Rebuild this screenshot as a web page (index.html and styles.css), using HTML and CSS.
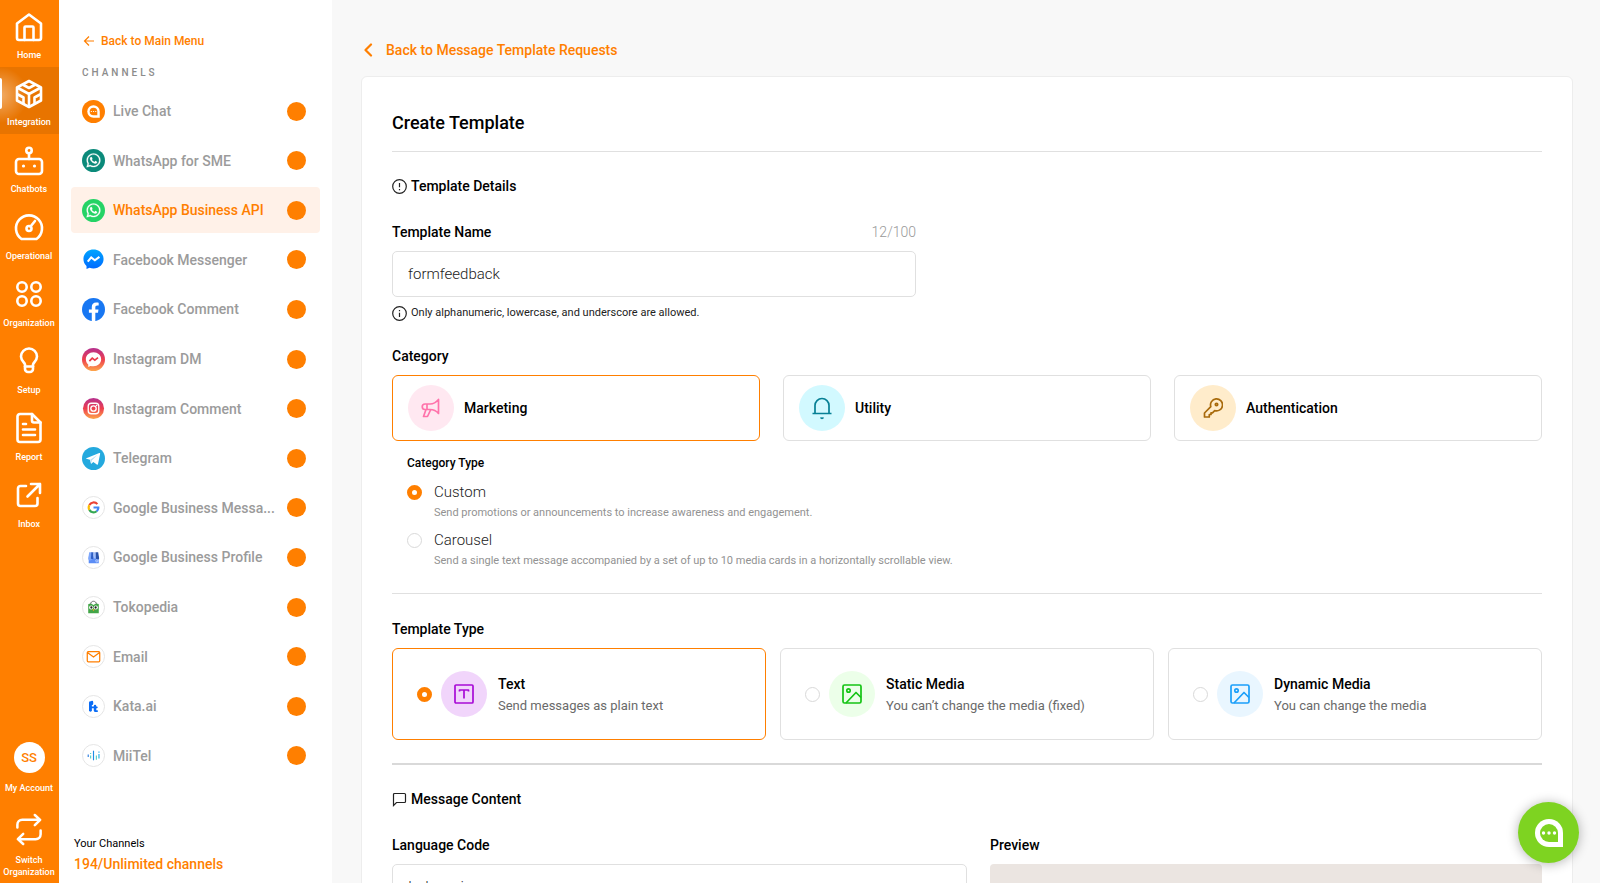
FILE: index.html
```html
<!DOCTYPE html>
<html lang="en">

<head>
    <meta charset="UTF-8">
    <meta name="viewport" content="width=device-width, initial-scale=1.0">
    <title>Create Template</title>
    <link rel="stylesheet" href="styles.css">
</head>

<body>
    <!-- Main navigation rail -->
    <nav class="rail">
        <a href="#" class="rail-item">
            <svg class="rail-icon" viewBox="0 0 28 28"><path d="M2 10.500 14 1.500l12 9V25a2 2 0 0 1-2 2H4a2 2 0 0 1-2-2z"/><path d="M9.500 27V14.500a1 1 0 0 1 1-1h7a1 1 0 0 1 1 1V27"/></svg>
            <span>Home</span>
        </a>
        <a href="#" class="rail-item active">
            <svg class="rail-icon" viewBox="0 0 28 28"><path d="M14 1 26 7.500v13L14 27 2 20.500v-13z"/><path d="M3 8l11 6 11-6M14 14v12M8.500 5l5.500 3 5.500-3M3 14.500l5.500 3v6M25 14.500l-5.500 3v6"/></svg>
            <span>Integration</span>
        </a>
        <a href="#" class="rail-item">
            <svg class="rail-icon" viewBox="0 0 28 28"><rect x="1" y="12" width="26" height="15" rx="3"/><circle cx="14" cy="3.500" r="2.700"/><path d="M14 6.500V12"/><circle class="solid" cx="8.500" cy="19" r="1.600"/><circle class="solid" cx="19.500" cy="19" r="1.600"/></svg>
            <span>Chatbots</span>
        </a>
        <a href="#" class="rail-item">
            <svg class="rail-icon" viewBox="0 0 28 28"><path d="M6.500 25A13 13 0 1 1 21.500 25z"/><circle cx="14" cy="14.500" r="2.500"/><path d="M15.500 12.500l4.500-5.500"/></svg>
            <span>Operational</span>
        </a>
        <a href="#" class="rail-item">
            <svg class="rail-icon" viewBox="0 0 28 28"><circle cx="7" cy="6" r="4.700"/><circle cx="21" cy="6" r="4.700"/><circle cx="7" cy="20" r="4.700"/><circle cx="21" cy="20" r="4.700"/></svg>
            <span>Organization</span>
        </a>
        <a href="#" class="rail-item">
            <svg class="rail-icon" viewBox="0 0 28 28"><path d="M10 19v-2.500C9.500 14.500 6 12.500 6 8.500a8 8 0 0 1 16 0c0 4-3.500 6-4 8V21a3 3 0 0 1-3 3h-2a3 3 0 0 1-3-3z"/><path d="M10 18.500h8"/></svg>
            <span>Setup</span>
        </a>
        <a href="#" class="rail-item">
            <svg class="rail-icon" viewBox="0 0 28 28"><path d="M17-1H5a2.500 2.500 0 0 0-2.500 2.500v23A2.500 2.500 0 0 0 5 27h18a2.500 2.500 0 0 0 2.500-2.500V7.500z"/><path d="M17-1v6.500a2 2 0 0 0 2 2h6.500M8 9h3M8 14.500h12M8 20h12"/></svg>
            <span>Report</span>
        </a>
        <a href="#" class="rail-item">
            <svg class="rail-icon" viewBox="0 0 28 28"><path d="M11 4H5.500A2.500 2.500 0 0 0 3 6.500v15A2.500 2.500 0 0 0 5.500 24H20a2.500 2.500 0 0 0 2.500-2.500V16"/><path d="M16 2h9v9M25 2 12.500 14.500"/></svg>
            <span>Inbox</span>
        </a>
        <div class="rail-bottom">
            <a href="#" class="rail-link">
                <span class="avatar">SS</span>
                <span>My Account</span>
            </a>
            <a href="#" class="rail-link">
                <svg class="switch-icon" viewBox="0 0 28 32"><path d="M2 14v-3a5 5 0 0 1 5-5h18M20 1l5.500 5L20 11.500M26 17v4a5 5 0 0 1-5 5H3M8 20.500 2.500 26 8 31"/></svg>
                <span>Switch Organization</span>
            </a>
        </div>
    </nav>

    <!-- Channels sidebar -->
    <aside class="sidebar">
        <a href="#" class="back-menu">
            <svg width="12" height="12" viewBox="0 0 12 12"><path d="M11 6H1.500M6 1.500 1.500 6 6 10.500" fill="none" stroke="currentColor" stroke-width="1.200"/></svg>
            Back to Main Menu
        </a>
        <h2>CHANNELS</h2>
        <ul class="channels">
            <li><a href="#" class="channel">
                <svg viewBox="0 0 24 24"><circle cx="12" cy="12" r="12" fill="#ff7f00"/><path d="M12 5.500a6.500 6.500 0 0 0 0 13h6.500V12A6.500 6.500 0 0 0 12 5.500z" fill="#fff"/><path d="M12 8a4 4 0 0 0 0 8h4v-4a4 4 0 0 0-4-4z" fill="#ff7f00"/><path d="M9.700 12h.1M12 12h.1M14.300 12h.1" stroke="#fff" stroke-width="1.300" stroke-linecap="round"/></svg>
                <span class="name">Live Chat</span><span class="dot"></span></a></li>
            <li><a href="#" class="channel">
                <svg viewBox="0 0 24 24"><circle cx="12" cy="12" r="12" fill="#0b8a7a"/><use href="#whatsapp"/></svg>
                <span class="name">WhatsApp for SME</span><span class="dot"></span></a></li>
            <li><a href="#" class="channel active">
                <svg viewBox="0 0 24 24"><circle cx="12" cy="12" r="12" fill="#25d366"/><use href="#whatsapp"/></svg>
                <span class="name">WhatsApp Business API</span><span class="dot"></span></a></li>
            <li><a href="#" class="channel">
                <svg viewBox="0 0 24 24"><path d="M12 1.500C6 1.500 1.500 5.800 1.500 11.500c0 3 1.200 5.500 3.200 7.300V22l3.200-1.300c1.300.4 2.600.6 4.100.6 6 0 10.500-4.200 10.500-9.800S18 1.500 12 1.500z" fill="url(#messenger)"/><path d="M6 14.200l3.600-4.400 3.800 3 4.800-3.600" fill="none" stroke="#fff" stroke-width="2.200"/></svg>
                <span class="name">Facebook Messenger</span><span class="dot"></span></a></li>
            <li><a href="#" class="channel">
                <svg viewBox="0 0 24 24"><circle cx="12" cy="12" r="12" fill="#1877f2"/><path d="M16.700 15.500l.5-3.500h-3.300V9.800c0-1 .5-1.900 2-1.900h1.500v-3s-1.400-.2-2.700-.2c-2.700 0-4.500 1.700-4.500 4.700V12h-3v3.500h3V24a12 12 0 0 0 3.700 0v-8.500z" fill="#fff"/></svg>
                <span class="name">Facebook Comment</span><span class="dot"></span></a></li>
            <li><a href="#" class="channel">
                <svg viewBox="0 0 24 24"><circle cx="12" cy="12" r="12" fill="url(#insta)"/><path d="M12 4.500c-4.500 0-8 3.100-8 7.300 0 2.300 1 4.200 2.500 5.500v2.600l2.400-1.200c1 .3 2 .4 3.100.4 4.500 0 8-3.100 8-7.300s-3.500-7.300-8-7.300z" fill="#fff"/><path d="M7.700 13.700l3-3.200 2.700 2.100 3.300-2.500" fill="none" stroke="#ea3c4c" stroke-width="1.800"/></svg>
                <span class="name">Instagram DM</span><span class="dot"></span></a></li>
            <li><a href="#" class="channel">
                <svg viewBox="0 0 24 24"><circle cx="12" cy="12" r="11" fill="url(#insta)"/><rect x="6.500" y="6.500" width="11" height="11" rx="3.200" fill="none" stroke="#fff" stroke-width="1.400"/><circle cx="12" cy="12" r="2.800" fill="none" stroke="#fff" stroke-width="1.400"/><circle cx="15.200" cy="8.800" r=".8" fill="#fff"/></svg>
                <span class="name">Instagram Comment</span><span class="dot"></span></a></li>
            <li><a href="#" class="channel">
                <svg viewBox="0 0 24 24"><circle cx="12" cy="12" r="12" fill="#24a9de"/><path d="M4.500 11.800 18 6.300c.6-.2 1.100.2.9 1l-2.200 10.400c-.2.8-.7 1-1.300.6l-3.600-2.700-1.800 1.700c-.4.400-.8.200-.8-.3l-.9-3.700-3.700-1c-.8-.2-.8-.3-.1-.5z" fill="#fff"/><path d="M8.500 13.200l7.500-4.800-5.800 5.800-.3 2.600z" fill="#b9dff2"/></svg>
                <span class="name">Telegram</span><span class="dot"></span></a></li>
            <li><a href="#" class="channel">
                <svg viewBox="0 0 24 24"><circle class="ring" cx="12" cy="12" r="11.500"/><g fill="none" stroke-width="2.300"><path d="M16 8.500A5 5 0 0 0 7.700 9.500" stroke="#ea4335"/><path d="M7.700 9.500a5 5 0 0 0 0 5" stroke="#fbbc05"/><path d="M7.700 14.500a5 5 0 0 0 7.600 1.400" stroke="#34a853"/><path d="M15.300 15.900A4.800 4.800 0 0 0 17 12h-5" stroke="#4285f4"/></g></svg>
                <span class="name">Google Business Messa...</span><span class="dot"></span></a></li>
            <li><a href="#" class="channel">
                <svg viewBox="0 0 24 24"><circle class="ring" cx="12" cy="12" r="11.500"/><path d="M7 11h10.500v7H7z" fill="#5b8df6"/><path d="M7.500 6.500h3v6.500a2 2 0 0 1-4 0z" fill="#7fa8fb"/><path d="M9.800 6.500H12V13a2 2 0 0 1-2.700 0z" fill="#2f5fc4"/><path d="M12 6.500h2.200l.5 6.500H12z" fill="#a3c0fc"/><path d="M14.200 6.500h2.700l1 6.500a2 2 0 0 1-3.400 0z" fill="#2952a8"/><circle cx="15.500" cy="15.500" r="1.200" fill="none" stroke="#dbe7ff" stroke-width=".7"/></svg>
                <span class="name">Google Business Profile</span><span class="dot"></span></a></li>
            <li><a href="#" class="channel">
                <svg viewBox="0 0 24 24"><circle class="ring" cx="12" cy="12" r="11.500"/><path d="M9 8.500c0-4 6-4 6 0" fill="none" stroke="#666" stroke-width="1"/><path d="M6.500 8.500c2-.8 4 0 5.500.8 1.500-.8 3.500-1.600 5.500-.8V18h-11z" fill="#42a547"/><circle cx="9.600" cy="12" r="2.200" fill="#fff"/><circle cx="14.400" cy="12" r="2.200" fill="#fff"/><circle cx="9.800" cy="12" r="1.200" fill="#222"/><circle cx="14.200" cy="12" r="1.200" fill="#222"/><path d="M10.800 13.800h2.400L12 15.800z" fill="#f6a623"/></svg>
                <span class="name">Tokopedia</span><span class="dot"></span></a></li>
            <li><a href="#" class="channel">
                <svg viewBox="0 0 24 24"><circle class="ring" cx="12" cy="12" r="11.500"/><path d="M6.500 7h11a1 1 0 0 1 1 1v8.500a1 1 0 0 1-1 1h-11a1 1 0 0 1-1-1V8a1 1 0 0 1 1-1zM6 8l6 4.500L18 8" fill="none" stroke="#ff7f00" stroke-width="1.300"/></svg>
                <span class="name">Email</span><span class="dot"></span></a></li>
            <li><a href="#" class="channel">
                <svg viewBox="0 0 24 24"><circle class="ring" cx="12" cy="12" r="11.500"/><g fill="none" stroke="#0a6cf5" stroke-width="3" stroke-linecap="round"><path d="M8.800 8v8"/><path d="M10.500 7.300v2" stroke-width="2.400"/><path d="M13.600 11.500v4.700" stroke-width="2.600"/><path d="M9.500 12.800h6M14 16.800h1.800" stroke-width="1.800"/></g></svg>
                <span class="name">Kata.ai</span><span class="dot"></span></a></li>
            <li><a href="#" class="channel">
                <svg viewBox="0 0 24 24"><circle class="ring" cx="12" cy="12" r="11.500"/><g fill="none" stroke-width="1.200"><path d="M6.500 11v2.500" stroke="#2a7de1"/><path d="M9 9.500v1M9 12v3" stroke="#57d3c4"/><path d="M12 7v10" stroke="#1c8ee6"/><path d="M15 12v4.500" stroke="#57d3c4"/><path d="M17.700 7.800v1.200M17.700 10.500v4.500" stroke="#1fb0e8"/></g></svg>
                <span class="name">MiiTel</span><span class="dot"></span></a></li>
        </ul>
        <div class="quota">
            <p>Your Channels</p>
            <strong>194/Unlimited channels</strong>
        </div>
    </aside>

    <!-- Main content -->
    <main class="main-content">
        <a href="#" class="back-link">
            <svg width="10" height="14" viewBox="0 0 10 14"><path d="M8 1.500 2.500 7 8 12.500" fill="none" stroke="currentColor" stroke-width="2.200" stroke-linecap="round" stroke-linejoin="round"/></svg>
            Back to Message Template Requests
        </a>

        <form class="card">
            <h1>Create Template</h1>
            <hr>

            <h2 class="section-title">
                <svg width="15" height="15" viewBox="0 0 15 15"><circle cx="7.500" cy="7.500" r="6.800"/><path d="M7.500 4v4.200M7.500 10v1.200"/></svg>
                Template Details
            </h2>
            <div class="name-field">
                <div class="field-head">
                    <label for="template-name" class="field-label">Template Name</label>
                    <span class="counter">12/100</span>
                </div>
                <input type="text" id="template-name" class="control" value="formfeedback">
                <p class="note">
                    <svg width="15" height="15" viewBox="0 0 15 15"><circle cx="7.500" cy="7.500" r="6.800"/><path d="M7.500 4v1.200M7.500 6.800V11"/></svg>
                    Only alphanumeric, lowercase, and underscore are allowed.
                </p>
            </div>

            <h3 class="field-label">Category</h3>
            <div class="categories">
                <button type="button" class="category selected">
                    <span class="badge pink"><svg width="20" height="22" viewBox="0 0 20 22"><path d="M4 7h5c4 0 6.500-2 8.500-4.500v14C15.500 14 13 12.500 9 12.500H4A2.700 2.700 0 0 1 4 7zM6 7v5.500M5 12.500 2.500 19.500h4l3.300-7"/></svg></span>
                    Marketing
                </button>
                <button type="button" class="category">
                    <span class="badge cyan"><svg width="22" height="24" viewBox="0 0 22 24"><path d="M1.500 17.500h19M4 17.500V9.500a7 7 0 0 1 14 0v8M9.500 21.500q1.500 1.500 3 0"/></svg></span>
                    Utility
                </button>
                <button type="button" class="category">
                    <span class="badge amber"><svg width="20" height="22" viewBox="0 0 20 22"><path d="M1.500 20v-4l6.300-6.300a6 6 0 1 1 3.900 3.900L9.500 15.800H8v1.700H6.300V20z"/><circle cx="13.500" cy="7.500" r="1.200"/></svg></span>
                    Authentication
                </button>
            </div>

            <fieldset class="category-type">
                <legend>Category Type</legend>
                <div class="option">
                    <input type="radio" name="category-type" id="custom" checked>
                    <label for="custom">Custom</label>
                    <p>Send promotions or announcements to increase awareness and engagement.</p>
                </div>
                <div class="option">
                    <input type="radio" name="category-type" id="carousel">
                    <label for="carousel">Carousel</label>
                    <p>Send a single text message accompanied by a set of up to 10 media cards in a horizontally scrollable view.</p>
                </div>
            </fieldset>
            <hr>

            <h3 class="field-label">Template Type</h3>
            <div class="types">
                <label class="type selected">
                    <input type="radio" name="template-type" checked>
                    <span class="badge purple"><svg width="20" height="20" viewBox="0 0 20 20"><rect x="1" y="1" width="18" height="18" rx="1"/><path d="M5.500 7.500V6h9v1.500M10 6v8.500"/></svg></span>
                    <span class="type-text"><b>Text</b><small>Send messages as plain text</small></span>
                </label>
                <label class="type">
                    <input type="radio" name="template-type">
                    <span class="badge green"><svg width="20" height="20" viewBox="0 0 20 20"><rect x="1" y="1" width="18" height="18" rx="1.500"/><circle cx="6.500" cy="6.500" r="1.700"/><path d="M4 19 14 8.500l5 5"/></svg></span>
                    <span class="type-text"><b>Static Media</b><small>You can’t change the media (fixed)</small></span>
                </label>
                <label class="type">
                    <input type="radio" name="template-type">
                    <span class="badge blue"><svg width="20" height="20" viewBox="0 0 20 20"><rect x="1" y="1" width="18" height="18" rx="1.500"/><circle cx="6.500" cy="6.500" r="1.700"/><path d="M4 19 14 8.500l5 5"/></svg></span>
                    <span class="type-text"><b>Dynamic Media</b><small>You can change the media</small></span>
                </label>
            </div>
            <hr class="thick">

            <h2 class="section-title">
                <svg width="15" height="15" viewBox="0 0 15 15"><path d="M1.500 13.500v-11a1 1 0 0 1 1-1h10a1 1 0 0 1 1 1v7a1 1 0 0 1-1 1h-8z"/></svg>
                Message Content
            </h2>
            <div class="message-row">
                <div>
                    <label for="language" class="field-label">Language Code</label>
                    <select id="language" class="control">
                        <option>Indonesian</option>
                        <option>English</option>
                    </select>
                </div>
                <div>
                    <h3 class="field-label">Preview</h3>
                    <div class="preview"></div>
                </div>
            </div>
        </form>
    </main>

    <button type="button" class="chat-button" aria-label="Chat">
        <svg width="30" height="30" viewBox="0 0 30 30"><path d="M15 1a14 14 0 0 0 0 28h14V15A14 14 0 0 0 15 1z" fill="#fff"/><path d="M15 6a9 9 0 0 0 0 18h9v-9a9 9 0 0 0-9-9z" fill="#7ed321"/><circle cx="9.500" cy="15" r="1.700" fill="#fff"/><circle cx="15" cy="15" r="1.700" fill="#fff"/><circle cx="20.500" cy="15" r="1.700" fill="#fff"/></svg>
    </button>

    <!-- Shared icon shapes -->
    <svg class="defs" aria-hidden="true">
        <defs>
            <linearGradient id="messenger" x1="0" y1="0" x2="0" y2="1"><stop offset="0" stop-color="#00a6ff"/><stop offset="1" stop-color="#0068ff"/></linearGradient>
            <linearGradient id="insta" x1="0" y1="0" x2="0" y2="1"><stop offset="0" stop-color="#b5308f"/><stop offset=".5" stop-color="#ee3f4e"/><stop offset="1" stop-color="#fda64b"/></linearGradient>
            <g id="whatsapp" transform="translate(4.800 4.600) scale(.6)" fill="#fff" stroke="#fff" stroke-width=".5"><path d="M17.472 14.382c-.297-.149-1.758-.867-2.030-.967-.273-.099-.471-.148-.67.15-.197.297-.767.966-.94 1.164-.173.199-.347.223-.644.075-.297-.15-1.255-.463-2.390-1.475-.883-.788-1.480-1.761-1.653-2.059-.173-.297-.018-.458.13-.606.134-.133.298-.347.446-.52.149-.174.198-.298.298-.497.099-.198.05-.371-.025-.52-.075-.149-.669-1.612-.916-2.207-.242-.579-.487-.5-.669-.51-.173-.008-.371-.01-.57-.01-.198 0-.52.074-.792.372-.272.297-1.040 1.016-1.040 2.479 0 1.462 1.065 2.875 1.213 3.074.149.198 2.096 3.200 5.077 4.487.709.306 1.262.489 1.694.625.712.227 1.360.195 1.871.118.571-.085 1.758-.719 2.006-1.413.248-.694.248-1.289.173-1.413-.074-.124-.272-.198-.57-.347m-5.421 7.403h-.004a9.870 9.870 0 0 1-5.031-1.378l-.361-.214-3.741.982.998-3.648-.235-.374a9.860 9.860 0 0 1-1.510-5.260c.001-5.450 4.436-9.884 9.888-9.884 2.640 0 5.122 1.030 6.988 2.898a9.825 9.825 0 0 1 2.893 6.994c-.003 5.450-4.437 9.884-9.885 9.884m8.413-18.297A11.815 11.815 0 0 0 12.050 0C5.495 0 .16 5.335.157 11.892c0 2.096.547 4.142 1.588 5.945L.057 24l6.305-1.654a11.882 11.882 0 0 0 5.683 1.448h.005c6.554 0 11.890-5.335 11.893-11.893a11.821 11.821 0 0 0-3.480-8.413z"/></g>
        </defs>
    </svg>
</body>

</html>
```
FILE: styles.css
```css
* {
    box-sizing: border-box;
}

body {
    font-family: Roboto, "Liberation Sans", sans-serif;
    margin: 0;
    background-color: #f8f8f8;
    color: #000;
    font-size: 14px;
    display: flex;
    height: 100vh;
    overflow: hidden;
}

a {
    text-decoration: none;
    color: inherit;
}

h1, h2, h3, p, ul, fieldset {
    margin: 0;
    padding: 0;
}

button, input, select {
    font-family: inherit;
    font-size: inherit;
    color: inherit;
}

.defs {
    position: absolute;
    width: 0;
    height: 0;
}

/* Orange rail */
.rail {
    flex: 0 0 59px;
    padding-right: 1px;
    background-color: #ff7f00;
    color: #fff;
    font-size: 9px;
    font-weight: 500;
    line-height: 12px;
    text-align: center;
    display: flex;
    flex-direction: column;
}

.rail-item {
    height: 67px;
    margin-right: -1px;
    padding: 13px 1px 0 0;
    display: flex;
    flex-direction: column;
    align-items: center;
    gap: 8px;
}

.rail-item.active {
    background: radial-gradient(circle at 0 42%, rgba(255, 255, 255, 0.4), rgba(255, 255, 255, 0) 28px), #e87400;
    position: relative;
}

/* White marker on the left edge */
.rail-item.active::before {
    content: "";
    position: absolute;
    left: 0;
    top: 11px;
    width: 2px;
    height: 31px;
    background-color: #fff;
    border-radius: 0 2px 2px 0;
}

.rail-icon, .switch-icon {
    width: 28px;
    height: 28px;
    fill: none;
    stroke: #fff;
    stroke-width: 2.600;
    stroke-linecap: round;
    stroke-linejoin: round;
    overflow: visible;
}

.rail-icon .solid {
    fill: #fff;
    stroke: none;
}

.rail-bottom {
    margin-top: auto;
    padding-bottom: 5px;
    display: flex;
    flex-direction: column;
    gap: 20px;
}

.rail-link {
    display: flex;
    flex-direction: column;
    align-items: center;
    gap: 9px;
}

.switch-icon {
    height: 31px;
}

.avatar {
    width: 31px;
    height: 31px;
    border-radius: 50%;
    background-color: #fff;
    color: #ff7f00;
    font-size: 13px;
    line-height: 31px;
}

/* Channels sidebar */
.sidebar {
    flex: none;
    width: 273px;
    background-color: #fff;
    padding: 33px 12px 9px;
    display: flex;
    flex-direction: column;
}

.back-menu {
    display: flex;
    align-items: center;
    gap: 6px;
    padding-left: 12px;
    color: #ff7f00;
    font-size: 12px;
    font-weight: 500;
    line-height: 16px;
}

.sidebar h2 {
    margin: 16px 0 7px 11px;
    color: #8c8c8c;
    font-size: 10px;
    font-weight: 500;
    letter-spacing: 3px;
    line-height: 16px;
}

.channels {
    flex: 1;
    list-style: none;
    display: flex;
    flex-direction: column;
    justify-content: space-between;
}

.channel {
    display: flex;
    align-items: center;
    height: 46px;
    padding: 0 14px 0 11px;
    border-radius: 4px;
    color: #9b9b9b;
    font-weight: 500;
}

.channel.active {
    background-color: #fff1e8;
    color: #ff7f00;
}

.channel svg {
    flex: none;
    width: 23px;
    height: 23px;
}

.channel .ring {
    fill: #fff;
    stroke: #e4e4e4;
}

.channel .name {
    flex: 1;
    min-width: 0;
    margin: 0 8px;
    line-height: 20px;
    white-space: nowrap;
}

.channel .dot {
    flex: none;
    width: 19px;
    height: 19px;
    border-radius: 50%;
    background-color: #ff7f00;
}

.quota {
    margin: 57px 0 0 3px;
}

.quota p {
    font-size: 11px;
    line-height: 16px;
}

.quota strong {
    display: block;
    margin-top: 2px;
    color: #ff7f00;
    font-weight: 500;
    line-height: 20px;
}

/* Main area */
.main-content {
    flex: 1;
    min-width: 0;
    padding: 40px 27px 40px 29px;
    overflow-y: auto;
    scrollbar-width: none;
}

.back-link {
    display: flex;
    align-items: center;
    gap: 13px;
    padding-left: 2px;
    color: #ff7f00;
    font-weight: 500;
    line-height: 20px;
}

.card {
    margin-top: 16px;
    padding: 34px 30px;
    background-color: #fff;
    border: 1px solid #ededed;
    border-radius: 6px;
}

.card h1 {
    font-size: 18px;
    font-weight: 500;
    line-height: 24px;
}

.card hr {
    height: 1px;
    margin: 16px 0 24px;
    border: none;
    background-color: #e0e0e0;
}

.card .category-type + hr {
    margin: 24px 0 25px;
}

.card hr.thick {
    height: 2px;
    margin: 23px 0 24px;
    background-color: #d9d9d9;
}

.section-title {
    display: flex;
    align-items: center;
    gap: 4px;
    margin-bottom: 26px;
    font-size: 14px;
    font-weight: 500;
    line-height: 20px;
}

.section-title svg, .note svg {
    fill: none;
    stroke: #222;
    stroke-width: 1.200;
}

.field-label {
    display: block;
    margin-bottom: 9px;
    font-size: 14px;
    font-weight: 500;
    line-height: 20px;
}

.name-field {
    max-width: 524px;
    margin-bottom: 25px;
}

.field-head {
    display: flex;
    justify-content: space-between;
}

.counter {
    color: #999;
    font-weight: 300;
    line-height: 20px;
}

.control {
    display: block;
    width: 100%;
    height: 46px;
    padding: 0 15px;
    background-color: #fff;
    border: 1px solid #e0e0e0;
    border-radius: 5px;
    color: #222;
    font-size: 15px;
    font-weight: 300;
    appearance: none;
}

.note {
    display: flex;
    align-items: center;
    gap: 4px;
    margin-top: 8px;
    color: #222;
    font-size: 11px;
    line-height: 16px;
}

/* Category cards */
.categories {
    display: grid;
    grid-template-columns: repeat(3, 1fr);
    gap: 23px;
}

.category {
    display: flex;
    align-items: center;
    gap: 10px;
    height: 66px;
    padding: 0 15px;
    background-color: #fff;
    border: 1px solid #e0e0e0;
    border-radius: 6px;
    font-weight: 500;
    text-align: left;
    cursor: pointer;
}

.category.selected, .type.selected {
    border-color: #ff7f00;
}

.badge {
    flex: none;
    width: 46px;
    height: 46px;
    border-radius: 50%;
    display: flex;
    align-items: center;
    justify-content: center;
}

.badge svg {
    fill: none;
    stroke: currentColor;
    stroke-width: 1.700;
    stroke-linejoin: round;
}

.pink { background-color: #ffe8f1; color: #ff73ab; }
.cyan { background-color: #d2f9ff; color: #078095; }
.amber { background-color: #ffeccb; color: #a86a0c; }
.purple { background-color: #f1d5fb; color: #a80bd6; }
.green { background-color: #ecffe9; color: #14c414; }
.blue { background-color: #e9f6ff; color: #1b9ffa; }

/* Radio options */
input[type="radio"] {
    appearance: none;
    flex: none;
    width: 15px;
    height: 15px;
    margin: 0;
    background-color: #fff;
    border: 1px solid #d9d9d9;
    border-radius: 50%;
}

input[type="radio"]:checked {
    border: 5px solid #ff7f00;
}

.category-type {
    margin: 14px 0 0 15px;
    border: none;
}

.category-type legend {
    padding: 0;
    margin-bottom: 11px;
    font-size: 12px;
    font-weight: 500;
    line-height: 16px;
}

.option {
    display: grid;
    grid-template-columns: 15px 1fr;
    column-gap: 12px;
    row-gap: 3px;
    align-items: center;
}

.option + .option {
    margin-top: 9px;
}

.option label {
    color: #222;
    font-size: 15px;
    font-weight: 300;
    line-height: 20px;
}

.option p {
    grid-column: 2;
    color: #929292;
    font-size: 11px;
    line-height: 16px;
}

/* Template type cards */
.types {
    display: grid;
    grid-template-columns: repeat(3, 1fr);
    gap: 14px;
}

.type {
    display: flex;
    align-items: center;
    height: 92px;
    padding: 0 24px;
    border: 1px solid #e0e0e0;
    border-radius: 6px;
}

.type .badge {
    margin: 0 11px 0 9px;
}

.type-text {
    padding-top: 2px;
}

.type-text b {
    display: block;
    font-weight: 500;
    line-height: 20px;
}

.type-text small {
    display: block;
    margin-top: 2px;
    color: #6a6a6a;
    font-size: 13px;
    line-height: 20px;
}

.message-row {
    display: grid;
    grid-template-columns: 575fr 552fr;
    gap: 23px;
}

.preview {
    height: 320px;
    background-color: #ebe5e1;
    border-radius: 4px;
}

/* Floating chat button */
.chat-button {
    position: fixed;
    right: 21px;
    bottom: 20px;
    width: 61px;
    height: 61px;
    padding: 0;
    display: flex;
    align-items: center;
    justify-content: center;
    background-color: #7ed321;
    border: none;
    border-radius: 50%;
    box-shadow: 0 1px 12px rgba(0, 0, 0, 0.3);
    cursor: pointer;
}
```
